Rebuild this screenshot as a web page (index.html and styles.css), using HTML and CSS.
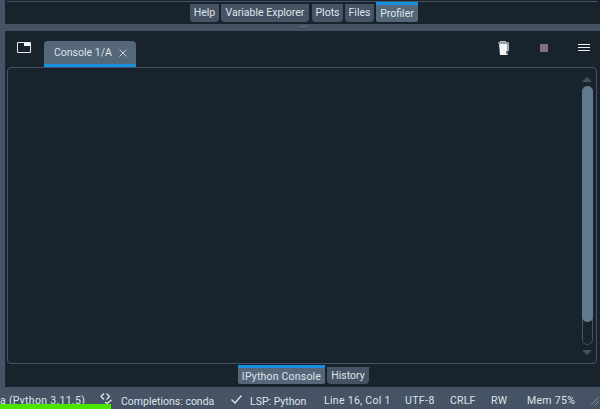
FILE: index.html
```html
<!DOCTYPE html>
<html lang="en">
<head>
<meta charset="utf-8">
<title>Spyder console</title>
<link rel="stylesheet" href="styles.css">
</head>
<body>
<div class="app">
  <div class="main">
    <div class="top-pane">
      <div class="top-pane-edge"></div>
      <div class="tabbar top-tabs">
        <span class="tab">Help</span>
        <span class="tab">Variable Explorer</span>
        <span class="tab">Plots</span>
        <span class="tab">Files</span>
        <span class="tab active">Profiler</span>
      </div>
    </div>
    <div class="splitter"></div>
    <div class="dock">
      <div class="toolbar">
        <svg class="icon-browse" width="14" height="11" viewBox="0 0 14 11"><path d="M.5.5h13v10H.5z" fill="none" stroke="#e8ebee"/><path d="M7 1h6v3H7z" fill="#f2f4f6"/></svg>
        <div class="console-tab"><span>Console 1/A</span>
          <svg class="close" width="8" height="8" viewBox="0 0 8 8"><path d="M.5.5l7 7M7.500.5l-7 7" stroke="#c8d0d8"/></svg>
        </div>
        <div class="tools">
          <svg width="12" height="14" viewBox="0 0 12 14"><path d="M2 0h6v1H2z" fill="#b9bfc5"/><path d="M0 1h11v1.500H0z" fill="#8f979f"/><path d="M1 2.500h8.500V14H2z" fill="#f1f3f5"/><path d="M9.500 2.500H11V10h-1v4h-.5z" fill="#a9b0b7"/><path d="M8 10h2v3H8z" fill="#6f777f"/></svg>
          <span class="stop"></span>
          <svg class="menu" width="12" height="8" viewBox="0 0 12 8"><path d="M0 .5h12M0 3.500h12M0 6.500h12" stroke="#eef0f2"/></svg>
        </div>
      </div>
      <div class="console">
        <div class="scroll">
          <i class="arrow up"></i>
          <div class="track"><div class="thumb"></div></div>
          <i class="arrow down"></i>
        </div>
      </div>
      <div class="tabbar bottom-tabs">
        <span class="tab active">IPython Console</span>
        <span class="tab">History</span>
      </div>
    </div>
  </div>
  <div class="status">
    <span class="item env">a (Python 3.11.5)</span>
    <svg class="s-code" width="13" height="11" viewBox="0 0 13 11"><path d="M4 .5L1 3.500 4 6.500M6.500.5l3 3-3 3M5 9l2 1.500L11.500 7" fill="none" stroke="#e4e8ec" stroke-width="1.200"/></svg>
    <span class="item s-comp">Completions: conda</span>
    <svg class="s-check" width="11" height="9" viewBox="0 0 11 9"><path d="M.5 4.500L4 8l6.500-7.500" fill="none" stroke="#e8ebee" stroke-width="1.200"/></svg>
    <span class="item s-lsp">LSP: Python</span>
    <span class="item s-line">Line 16, Col 1</span>
    <span class="item s-enc">UTF-8</span>
    <span class="item s-eol">CRLF</span>
    <span class="item s-rw">RW</span>
    <span class="item s-mem">Mem 75%</span>
    <svg class="grip" width="10" height="10" viewBox="0 0 10 10"><path d="M9 1L1 9M9 5L5 9" stroke="#7d8a98"/></svg>
  </div>
  <div class="progress"></div>
</div>
</body>
</html>
```
FILE: styles.css
```css
* { box-sizing: border-box; }
html, body { margin: 0; padding: 0; }
body {
  width: 600px; height: 409px; overflow: hidden;
  background: #19232d;
  font-family: Roboto, "Noto Sans", sans-serif;
  font-size: 10.5px;
  color: #dfe3e8;
}
.app { position: relative; width: 600px; height: 409px; display: flex; flex-direction: column; }
.main { flex: 1; min-height: 0; border-left: 5px solid #455364; padding-bottom: 3px; display: flex; flex-direction: column; }

.top-pane { height: 24px; flex: none; }
.top-pane-edge { height: 2px; margin: 0 3px 0 2px; border-bottom: 1px solid #455364; }
.tabbar { display: flex; }
.top-tabs { margin-left: 185px; gap: 2px; height: 20px; align-items: flex-end; }
.tab {
  display: flex; align-items: center; justify-content: center;
  height: 18px; background: #455364; color: #dfe3e8;
  border-radius: 0 0 4px 4px; line-height: 1; padding-top: 1px;
}
.top-tabs .tab:nth-child(1) { width: 29px; }
.top-tabs .tab:nth-child(2) { width: 88px; margin-right: 1px; }
.top-tabs .tab:nth-child(3) { width: 31px; }
.top-tabs .tab:nth-child(4) { width: 29px; }
.tab.active {
  background: #54687a; border-top: 3px solid #1a8fe0; height: 20px;
  border-radius: 0 0 2px 2px;
}
.top-tabs .tab.active { width: 42px; }

.splitter { height: 7px; flex: none; background: #455364; display: flex; justify-content: center; padding-top: 2px; }
.splitter::before { content: ""; width: 8px; height: 1px; background: #5e6e7f; }

.dock { flex: 1; min-height: 0; display: flex; flex-direction: column; }
.toolbar { height: 36px; display: flex; align-items: flex-end; flex: none; }
.icon-browse { margin: 0 13px 14px 12px; flex: none; }
.console-tab {
  width: 92px; height: 26px; display: flex; align-items: center;
  padding-left: 10px; gap: 7px;
  background: #54687a; border-bottom: 3px solid #1a8fe0;
  border-radius: 4px 4px 0 0;
}
.close { flex: none; }
.tools { margin-left: auto; display: flex; align-items: center; height: 14px; margin-bottom: 12px; margin-right: 10px; }
.stop { width: 8px; height: 8px; background: #7e717b; margin: 0 30px; }

.console {
  height: 297px; margin: 0 3px 0 2px; flex: none;
  border: 1px solid #455364; border-radius: 4px;
  display: flex; justify-content: flex-end;
}
.scroll { width: 12px; margin-right: 3px; display: flex; flex-direction: column; align-items: center; padding: 9px 0 8px; }
.arrow { width: 0; height: 0; border-left: 5px solid transparent; border-right: 5px solid transparent; flex: none; }
.arrow.up { border-bottom: 5px solid #455364; }
.arrow.down { border-top: 5px solid #455364; }
.track { flex: 1; width: 11px; margin: 4px 0 5px; border: 1px solid #455364; border-radius: 6px; }
.thumb { height: 236px; margin: -1px; background: #60798b; border-radius: 6px; }

.bottom-tabs { margin-left: 233px; margin-top: 1px; gap: 2px; height: 19px; align-items: flex-start; flex: none; }
.bottom-tabs .tab:nth-child(1) { width: 87px; height: 19px; padding-top: 2px; letter-spacing: .2px; }
.bottom-tabs .tab:nth-child(2) { width: 42px; height: 17px; margin-top: 2px; }

.status {
  height: 22px; flex: none; background: #455364;
  white-space: nowrap; display: flex; align-items: center; padding-top: 4px;
}
.status svg { flex: none; }
.item { display: block; flex: none; }
.env { width: 100px; letter-spacing: .3px; }
.s-code { margin-top: -3px; }
.s-comp { width: 98px; margin-left: 8px; padding-top: 2px; margin-right: 12px; }
.s-check { margin-top: -2px; margin-right: 8px; }
.s-lsp { width: 74px; padding-top: 2px; }
.s-line { width: 81px; letter-spacing: .3px; }
.s-enc { width: 45px; letter-spacing: .4px; }
.s-eol { width: 41px; letter-spacing: .2px; }
.s-rw { width: 36px; letter-spacing: .3px; }
.s-mem { width: 63px; letter-spacing: .3px; }
.grip { margin-top: 2px; }
.progress { position: absolute; left: 0; bottom: 0; width: 111px; height: 5px; background: #4be600; }
```
